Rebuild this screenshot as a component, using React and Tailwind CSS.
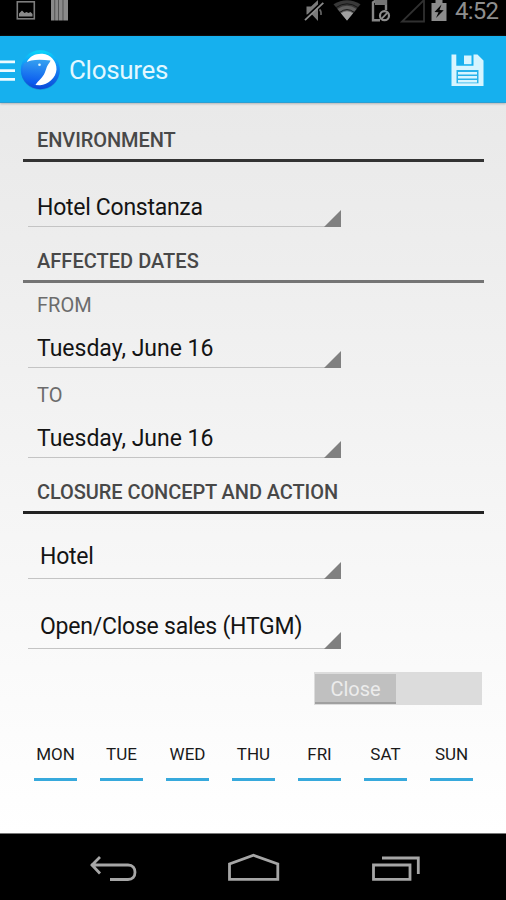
function StatusBar() {
  return (
    <header className="relative h-[36px] w-full shrink-0 bg-black">
      <svg width="506" height="36" viewBox="0 0 506 36" fill="none" className="block">
        {/* picture */}
        <rect x="17.3" y="1.8" width="17" height="17" stroke="#7d7d7d" strokeWidth="1.6" />
        <path d="M19 16.5V13.5L22 10.5L24.5 13L26.5 12L28.5 13L30.5 12L32.5 14V16.5Z" fill="#8a8a8a" />
        {/* barcode */}
        <path d="M51 0H54.7V20.5H51ZM55.1 0H58.5V20.5H55.1ZM58.9 0H62.8V20.5H58.9ZM63.2 0H68V20.5H63.2Z" fill="#8a8a8a" />
        {/* muted */}
        <path d="M306.5 6.5H311L318 0V21L312 14.5H306.5Z" fill="#7a7a7a" />
        <path d="M304.5 18.5L322.5 1.5" stroke="#000" strokeWidth="1.8" />
        <path d="M305 20.2L323.3 2.8" stroke="#8c8c8c" strokeWidth="1.8" />
        <path d="M319.5 9.5Q321.5 11 321 15" stroke="#666" strokeWidth="1.6" />
        {/* wifi */}
        <path d="M333.5 4.3Q347 -4 360.5 4.3L347 20.5Z" fill="#383838" />
        <path d="M337.5 9Q347 2.5 356.5 9L347 20.5Z" fill="#5f5f5f" />
        <path d="M341 13.3Q347 9 353 13.3L347 20.5Z" fill="#a0a0a0" />
        <path d="M336 7.6Q347 0 358 7.6M340 12.2Q347 7 354 12.2" stroke="#151515" strokeWidth="1" />
        {/* sim */}
        <path d="M380 20.3H373V2.5L376 0.5H386V10" stroke="#858585" strokeWidth="2.4" />
        <path d="M375 0H387V5H375Z" fill="#757575" />
        <circle cx="384.5" cy="15.7" r="4.5" fill="#000" stroke="#8c8c8c" strokeWidth="2.2" />
        <path d="M381.5 18.8L387.5 12.6" stroke="#8c8c8c" strokeWidth="1.8" />
        {/* signal */}
        <path d="M402 21.5H424V0Z" stroke="#303030" strokeWidth="1.8" />
        {/* battery */}
        <path d="M431.5 3H435.5V0H442.5V3H446.5V21H431.5Z" fill="#8c8c8c" />
        <path d="M441.5 4.5L434.5 12L438.5 12.3L436 18L443.7 10.3L439.5 10Z" fill="#050505" />
      </svg>
      <span className="absolute left-[455px] top-0 text-[24px] leading-[23px] tracking-[-0.8px] text-[#8e8e8e]">4:52</span>
    </header>
  );
}

function ActionBar() {
  return (
    <div className="relative flex h-[67px] w-full shrink-0 items-center border-b border-[#2b9ed2] bg-[#16b0ee] shadow-[0_1px_2px_#b5b5b5]">
      <svg width="62" height="66" viewBox="0 36 62 66" fill="none" className="shrink-0">
        <defs>
          <linearGradient id="disc" x1="0" y1="0" x2="0" y2="1">
            <stop offset="0" stopColor="#08d8fa" />
            <stop offset="0.45" stopColor="#1687f5" />
            <stop offset="1" stopColor="#0a48d8" />
          </linearGradient>
          <linearGradient id="bird" x1="0.5" y1="0" x2="0.4" y2="1">
            <stop offset="0" stopColor="#35a0f0" />
            <stop offset="1" stopColor="#0755ef" />
          </linearGradient>
        </defs>
        <path d="M0 61.8H15M0 70.6H15M0 79.4H15" stroke="#effbff" strokeWidth="2.8" />
        <circle cx="40.3" cy="70.8" r="19.2" fill="#1583c4" opacity="0.55" />
        <circle cx="40.3" cy="69.7" r="19.5" fill="url(#disc)" />
        <path d="M27 61.5C30 56 36 53.3 42.5 53.8C50.5 54.5 56.8 61 56.5 69.5C56 78 48 84.5 40 85.3L35 85L30 70Z" fill="#fff" />
        <path d="M24 63.5C31 58.8 41 59.5 50.5 60.5C49.8 62.8 47.5 65 46.8 67C45.2 71.5 44.5 75 40.5 79C38.5 81 37 82.5 35.5 85C27 83 22 76 22.5 69Z" fill="url(#bird)" />
        <circle cx="39.5" cy="64.7" r="1.3" fill="#d9f6ff" />
      </svg>
      <h1 className="ml-[7px] mt-[2px] text-[26px] leading-[30px] tracking-[-0.3px] text-[#e3f8ff]">Closures</h1>
      <svg width="33" height="33" viewBox="0 0 33 33" className="ml-auto mr-[22px] mt-[2px]">
        <path d="M0.5 0.5H5.3V11.8H22.5V0.5H26.5L32.5 6.5V32H0.5Z" fill="#d7f5ff" />
        <path d="M13 1.5H20.5V10.2H13Z" fill="#d7f5ff" />
        <path d="M5.5 16H27.5V29.3H5.5Z" fill="#27b2ea" />
        <path d="M7 18H26V20.6H7ZM7 22H26V24.6H7ZM7 26H26V28.6H7Z" fill="#d7f5ff" />
      </svg>
    </div>
  );
}

function Heading({ children, className }) {
  return (
    <h2 className={`ml-[23px] w-[461px] shrink-0 pl-[14px] text-[20px] font-medium leading-[24px] text-[#484848] ${className}`}>
      {children}
    </h2>
  );
}

function Spinner({ children, className }) {
  return (
    <div className={`ml-[28px] flex w-[313px] shrink-0 items-start justify-between border-b-[1.5px] border-[#c4c4c4] text-[23px] leading-[28px] text-[#141414] ${className}`}>
      <span className="whitespace-nowrap">{children}</span>
      <svg width="17" height="17" viewBox="0 0 17 17" className="mb-[-1px] shrink-0 self-end">
        <path d="M0 17L17 0V17Z" fill="#808080" />
      </svg>
    </div>
  );
}

const days = ["MON", "TUE", "WED", "THU", "FRI", "SAT", "SUN"];

export default function App() {
  return (
    <div className="flex h-[900px] w-[506px] flex-col overflow-hidden bg-black font-['Roboto',sans-serif]">
      <StatusBar />
      <ActionBar />
      <main className="flex h-[730px] w-full shrink-0 flex-col bg-linear-to-b from-[#e9e9e9] to-white">
        <Heading className="h-[59px] border-b-[3px] border-[#333] pt-[25px] tracking-[-0.08px]">ENVIRONMENT</Heading>
        <Spinner className="h-[65px] pl-[9px] pt-[32px] tracking-[-0.28px]">Hotel Constanza</Spinner>
        <Heading className="h-[56px] border-b-[3px] border-[#747474] pt-[22px] tracking-[0.03px]">AFFECTED DATES</Heading>
        <p className="h-[21px] shrink-0 pl-[37px] pt-[10px] text-[20px] leading-[24px] text-[#6c6c6c]">FROM</p>
        <Spinner className="h-[64px] pl-[9px] pt-[31px]">Tuesday, June 16</Spinner>
        <p className="h-[26px] shrink-0 pl-[37px] pt-[15px] text-[20px] leading-[24px] text-[#6c6c6c]">TO</p>
        <Spinner className="h-[64px] pl-[9px] pt-[31px]">Tuesday, June 16</Spinner>
        <Heading className="h-[56px] border-b-[3px] border-[#222] pt-[22px] tracking-[-0.08px]">CLOSURE CONCEPT AND ACTION</Heading>
        <Spinner className="h-[65px] pl-[12px] pt-[29px] tracking-[-0.28px]">Hotel</Spinner>
        <Spinner className="h-[70px] pl-[12px] pt-[34px] tracking-[-0.23px]">Open/Close sales (HTGM)</Spinner>
        <div className="ml-[314px] mt-[23px] flex h-[33px] w-[168px] shrink-0 bg-[#dcdcdc] p-px pt-[2px]">
          <span className="h-[30px] w-[81px] border-b-2 border-[#a0a0a0] bg-[#c0c0c0] text-center text-[20px] leading-[30px] text-[#ececec]">Close</span>
        </div>
        <div className="ml-[34px] mt-[35px] flex w-[439px] shrink-0 justify-between">
          {days.map((d) => (
            <span key={d} className="h-[41px] w-[43px] border-b-[3px] border-[#37a9dc] pt-[4px] text-center text-[17px] leading-[20px] text-[#1a1a1a]">
              {d}
            </span>
          ))}
        </div>
      </main>
      <nav className="h-[67px] w-full shrink-0 border-t border-[#777] bg-black">
        <svg width="506" height="66" viewBox="0 834 506 66" fill="none" stroke="#a6a6a6" strokeWidth="2.8" className="block">
          <path d="M91 865H128C133 865 135 868.5 135 872.3C135 876.5 132.5 879.5 128 879.5H110M100 857L92 865L100 873.5" />
          <path d="M229.5 879.3V864L253.5 855.3L277.8 864V879.3Z" />
          <path d="M373.5 865H410V879.3H373.5ZM382 858H418.3V874" />
        </svg>
      </nav>
    </div>
  );
}
